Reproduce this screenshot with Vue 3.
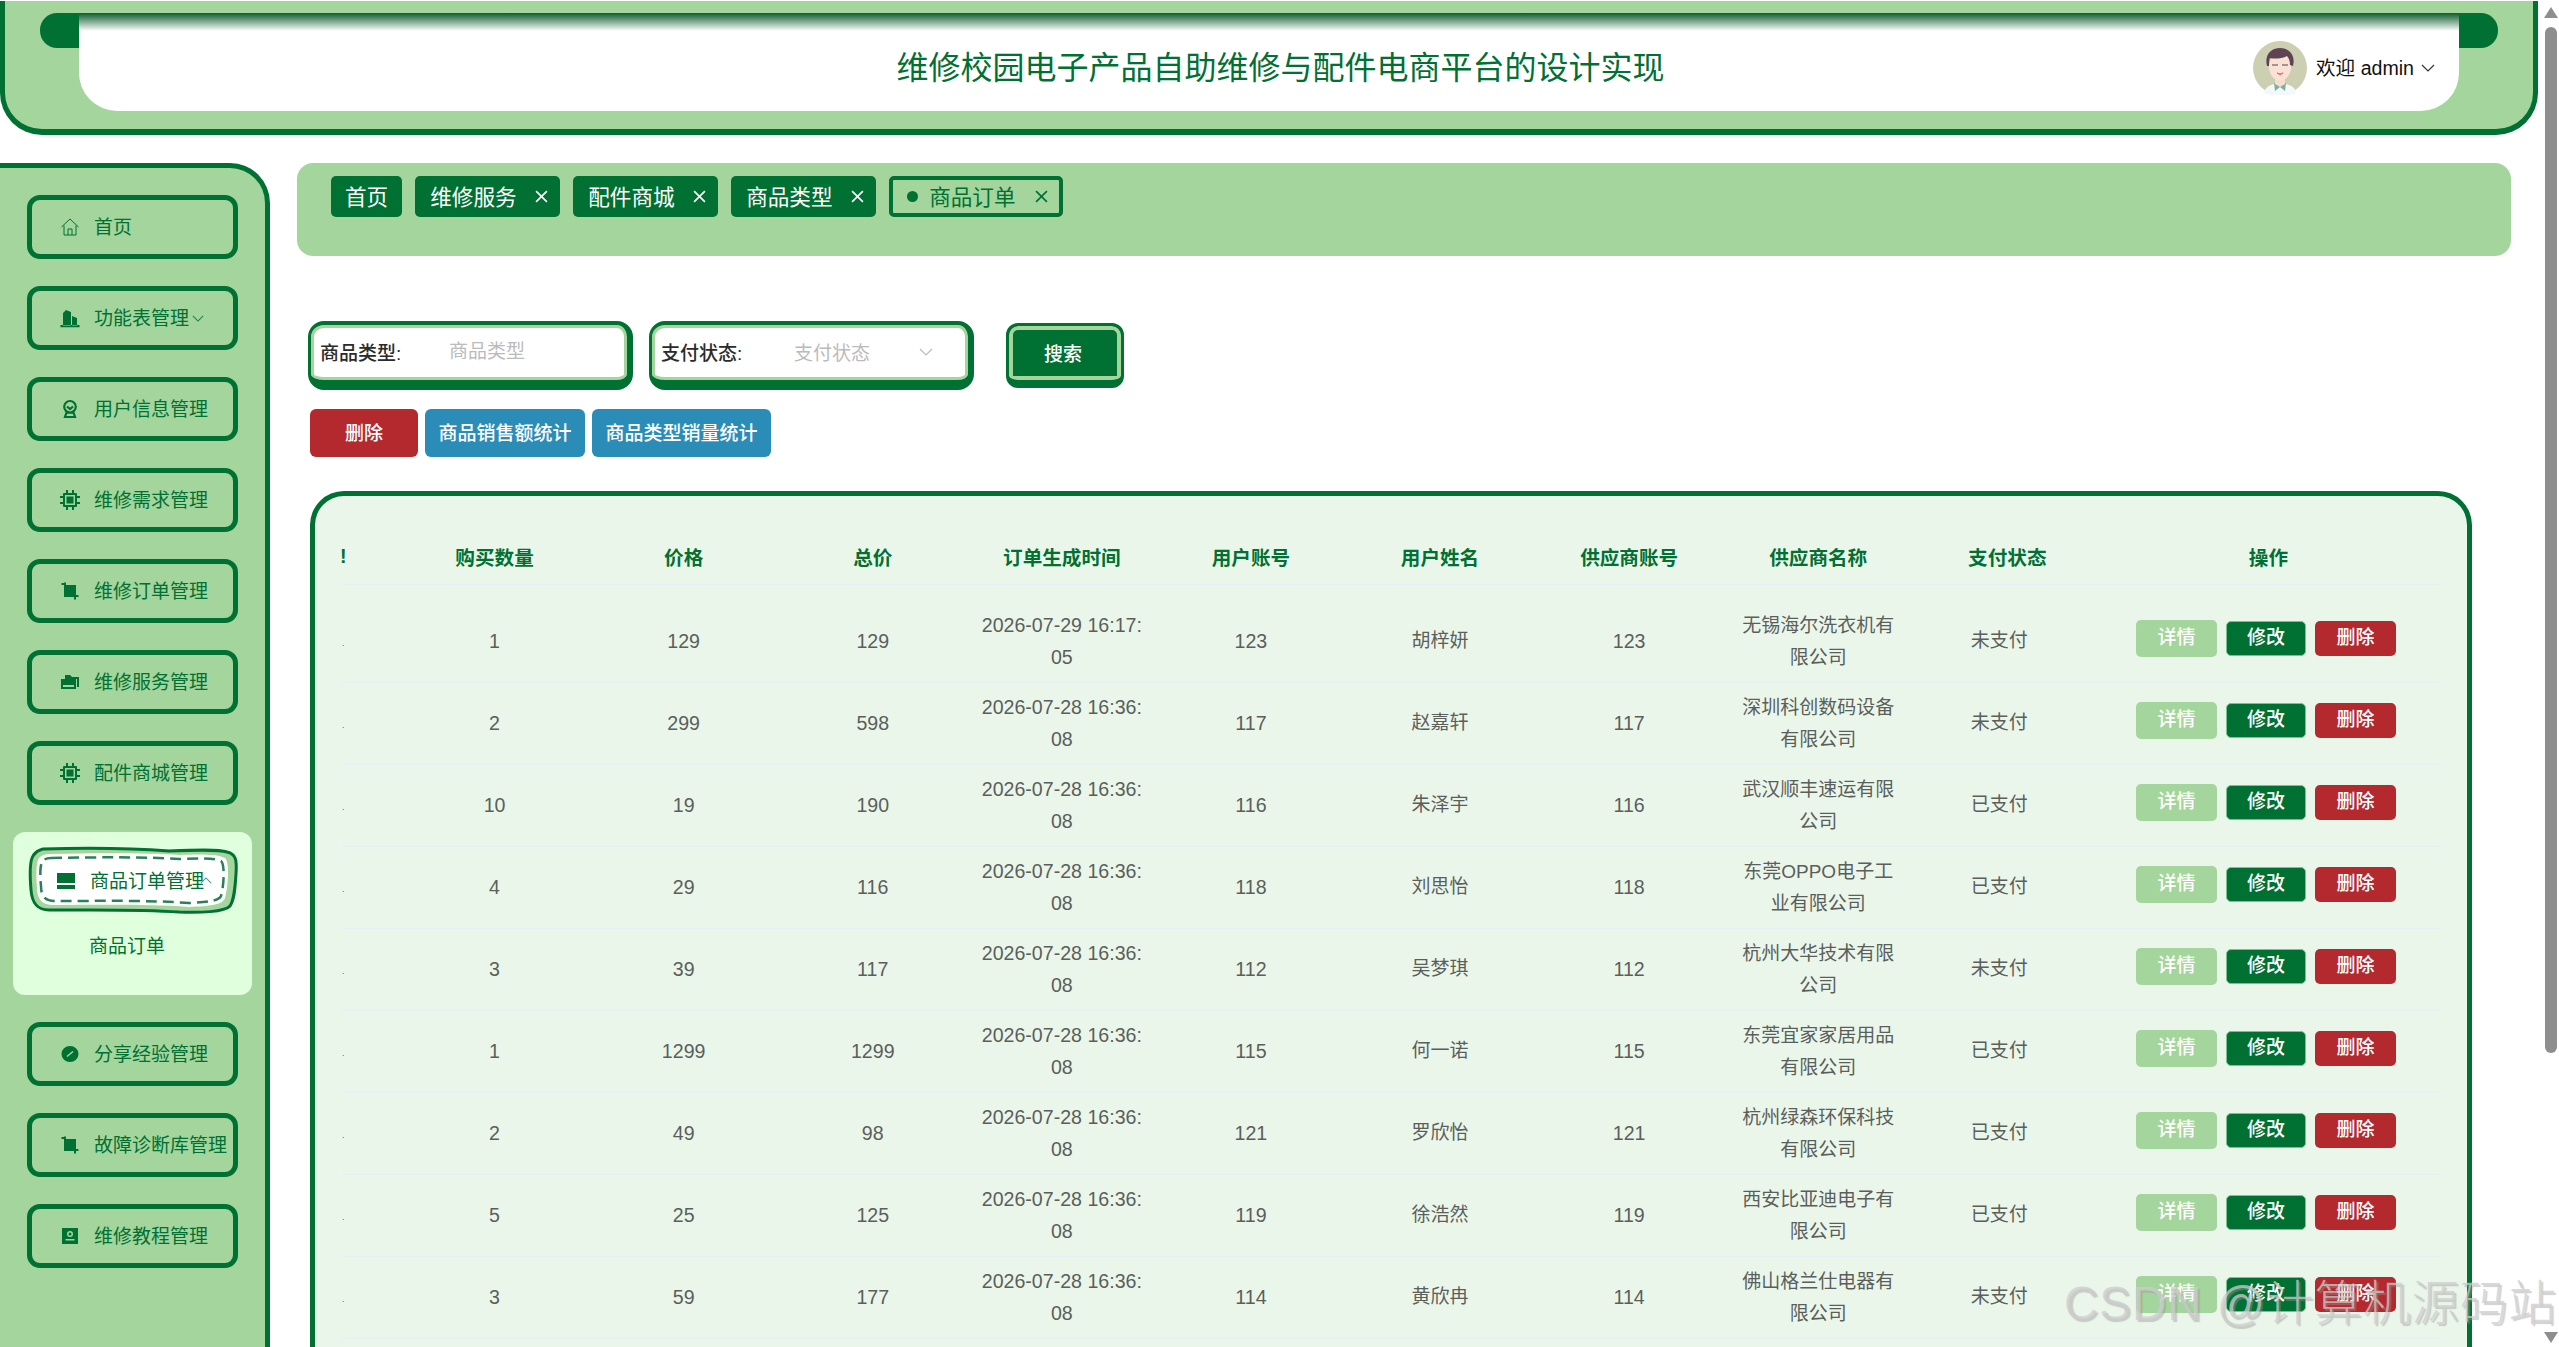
<script setup>
const icons = {
  home: { d: 'M1.5 10 10 2l8.5 8M4 8.5V18h12V8.5M8 18v-6h4v6', line: true },
  office: { d: 'M3 17.5V5l3-3 5 2v13.5zM12 17.5V8l5 2v7.5zM.5 17h19v2.2H.5z' },
  user: { d: 'M10 2a5.8 5.8 0 1 0 0 11.6A5.8 5.8 0 1 0 10 2zM7 7.5l3 2.5 3-2.5M6.5 13.5 5 18h10l-1.5-4.5', line: true, bold: true },
  cpu: { d: 'M4 3h12a1 1 0 0 1 1 1v12a1 1 0 0 1-1 1H4a1 1 0 0 1-1-1V4a1 1 0 0 1 1-1zM5 5v10h10V5zM6.5 6.5h7v7h-7zM6 0h2v3H6zM12 0h2v3h-2zM6 17h2v3H6zM12 17h2v3h-2zM0 6h3v2H0zM0 12h3v2H0zM17 6h3v2h-3zM17 12h3v2h-3z' },
  crop: { d: 'M4 1.5h2V4h10v10h2.5v2H16v2.5h-2V16H4V4H1.5V2H4z' },
  folder: { d: 'M5 3h5l2 2h7v10h-2V7H5zM1 7h15v10H1zM3 13v2h11v-2z' },
  order: { d: 'M1 2h18v10H1zM1 14h18v4H1z' },
  help: { d: 'M10 2a8.5 8 0 1 0 0 16 8.5 8 0 1 0 0-16zM12.5 7l1 1-6 5-1-1z' },
  card: { d: 'M2 2h16v16H2zM10 5a3 3 0 1 0 0 6 3 3 0 1 0 0-6zM10 6.5a1.5 1.5 0 1 1 0 3 1.5 1.5 0 1 1 0-3zM5.5 13h9v1.5h-9z' }
}

const menus = [
  { title: '首页', icon: 'home' },
  { title: '功能表管理', icon: 'office', arrow: true },
  { title: '用户信息管理', icon: 'user' },
  { title: '维修需求管理', icon: 'cpu' },
  { title: '维修订单管理', icon: 'crop' },
  { title: '维修服务管理', icon: 'folder' },
  { title: '配件商城管理', icon: 'cpu' },
  { title: '商品订单管理', icon: 'order', open: true, children: ['商品订单'] },
  { title: '分享经验管理', icon: 'help' },
  { title: '故障诊断库管理', icon: 'crop' },
  { title: '维修教程管理', icon: 'card' }
]

const tags = [
  { title: '首页', fixed: true },
  { title: '维修服务' },
  { title: '配件商城' },
  { title: '商品类型' },
  { title: '商品订单', active: true }
]

const columns = ['购买数量', '价格', '总价', '订单生成时间', '用户账号', '用户姓名', '供应商账号', '供应商名称', '支付状态']

const rows = [
  [1, 129, 129, '2026-07-29 16:17:05', 123, '胡梓妍', 123, '无锡海尔洗衣机有限公司', '未支付'],
  [2, 299, 598, '2026-07-28 16:36:08', 117, '赵嘉轩', 117, '深圳科创数码设备有限公司', '未支付'],
  [10, 19, 190, '2026-07-28 16:36:08', 116, '朱泽宇', 116, '武汉顺丰速运有限公司', '已支付'],
  [4, 29, 116, '2026-07-28 16:36:08', 118, '刘思怡', 118, '东莞OPPO电子工业有限公司', '已支付'],
  [3, 39, 117, '2026-07-28 16:36:08', 112, '吴梦琪', 112, '杭州大华技术有限公司', '未支付'],
  [1, 1299, 1299, '2026-07-28 16:36:08', 115, '何一诺', 115, '东莞宜家家居用品有限公司', '已支付'],
  [2, 49, 98, '2026-07-28 16:36:08', 121, '罗欣怡', 121, '杭州绿森环保科技有限公司', '已支付'],
  [5, 25, 125, '2026-07-28 16:36:08', 119, '徐浩然', 119, '西安比亚迪电子有限公司', '已支付'],
  [3, 59, 177, '2026-07-28 16:36:08', 114, '黄欣冉', 114, '佛山格兰仕电器有限公司', '未支付']
]
</script>

<template>
  <div class="page">
    <header class="top">
      <div class="top-bar">
        <div class="top-panel">
          <span></span>
          <h1 class="title">维修校园电子产品自助维修与配件电商平台的设计实现</h1>
          <div class="user">
            <svg class="avatar" viewBox="0 0 54 54">
              <circle cx="27" cy="27" r="27" fill="#cdcfb3" />
              <path d="M11 52c1-7 8-9 16-10 8 1 15 3 16 10-5 3-27 3-32 0z" fill="#f3f8fb" />
              <path d="M21 42l6 3 6-3-1 8-5-4-5 4z" fill="#7fb09a" />
              <path d="M22 34h10v9l-5 3-5-3z" fill="#f6dccb" />
              <ellipse cx="27" cy="26" rx="11" ry="13.5" fill="#f9e2d5" />
              <path d="M14 25c-3-12 5-18 13-18s16 6 13 18l-3-1c0-4-1-7-3-9-5 3-14 3-17 2-1 2-1 5-1 8z" fill="#5e4353" />
              <path d="M19 24h6M29 24h6" stroke="#8b7a78" stroke-width="1.5" />
              <path d="M24 32q3 2 6 0-3 3-6 0z" fill="#f0655f" stroke="#f0655f" />
            </svg>
            <span class="user-name">欢迎 <b>admin</b></span>
            <svg class="chevron" viewBox="0 0 14 8"><path d="M1 1l6 6 6-6" /></svg>
          </div>
        </div>
      </div>
    </header>

    <div class="body">
      <aside class="side">
        <template v-for="m in menus" :key="m.title">
          <div v-if="m.open" class="group">
            <div class="menu-item active">
              <svg class="wobble" viewBox="0 0 208 65">
                <path class="wobble-outer" d="M14 1C50 0 100 0 140 3C165 2 190 1 198 4C207 6 208 12 207 26C206 42 205 52 201 58C196 64 170 65 150 64C110 61 60 62 20 62C8 62 3 55 2 42C1 30 0 14 4 8C7 3 10 2 14 1Z" />
                <path class="wobble-inner" d="M20 6C70 5 120 5 150 7C170 6 190 6 196 10C201 14 199 40 196 50C194 57 180 58 160 59C120 56 70 57 24 57C14 57 8 52 8 40C7 28 7 14 10 10C13 7 16 6 20 6Z" />
                <path class="wobble-dash" d="M22 10C70 9 120 9 150 11C170 10 186 10 192 13C196 16 195 38 192 48C190 53 178 54 160 55C120 52 70 53 26 53C16 53 12 48 12 38C11 28 11 18 13 14C15 11 18 10 22 10Z" />
              </svg>
              <svg class="menu-icon" viewBox="0 0 20 20"><path :d="icons[m.icon].d" fill-rule="evenodd" /></svg>
              <span class="menu-text">{{ m.title }}</span>
              <svg class="menu-arrow up" viewBox="0 0 14 8"><path d="M1 1l6 6 6-6" /></svg>
            </div>
            <div v-for="c in m.children" :key="c" class="sub-item">{{ c }}</div>
          </div>
          <div v-else class="menu-item">
            <svg class="menu-icon" :class="{ line: icons[m.icon].line, bold: icons[m.icon].bold }" viewBox="0 0 20 20">
              <path :d="icons[m.icon].d" fill-rule="evenodd" />
            </svg>
            <span class="menu-text">{{ m.title }}</span>
            <svg v-if="m.arrow" class="menu-arrow" viewBox="0 0 14 8"><path d="M1 1l6 6 6-6" /></svg>
          </div>
        </template>
      </aside>

      <main class="main">
        <div class="tag-bar">
          <div v-for="t in tags" :key="t.title" class="tag" :class="{ on: t.active }">
            <i v-if="t.active" class="dot"></i>
            <span>{{ t.title }}</span>
            <svg v-if="!t.fixed" class="tag-close" viewBox="0 0 12 12"><path d="M1 1l10 10M11 1 1 11" /></svg>
          </div>
        </div>

        <div class="search">
          <label class="field">
            <span class="field-label">商品类型:</span>
            <input class="field-input" type="text" placeholder="商品类型" readonly />
          </label>
          <div class="field">
            <span class="field-label wide">支付状态:</span>
            <span class="field-holder">支付状态</span>
            <svg class="field-arrow" viewBox="0 0 14 8"><path d="M1 1l6 6 6-6" /></svg>
          </div>
          <button class="search-btn" type="button">搜索</button>
        </div>

        <div class="actions">
          <button class="btn red" type="button">删除</button>
          <button class="btn blue b1" type="button">商品销售额统计</button>
          <button class="btn blue b2" type="button">商品类型销量统计</button>
        </div>

        <section class="card">
          <table class="grid">
            <colgroup>
              <col class="col-first" />
              <col v-for="c in columns" :key="c" class="col-data" />
              <col />
            </colgroup>
            <thead>
              <tr>
                <th class="check">!</th>
                <th v-for="c in columns" :key="c">{{ c }}</th>
                <th class="op-head">操作</th>
              </tr>
            </thead>
            <tbody>
              <tr v-for="(r, i) in rows" :key="i">
                <td class="check"><span class="tick">.</span></td>
                <td v-for="(v, j) in r" :key="j" :class="{ cjk: j === 5, supplier: j === 7, status: j === 8 }">{{ v }}</td>
                <td>
                  <div class="ops">
                    <button class="op detail" type="button">详情</button>
                    <button class="op edit" type="button">修改</button>
                    <button class="op del" type="button">删除</button>
                  </div>
                </td>
              </tr>
            </tbody>
          </table>
        </section>
      </main>
    </div>

    <div class="scrollbar">
      <i class="arrow-up"></i>
      <div class="thumb"></div>
      <i class="arrow-down"></i>
    </div>
    <div class="watermark">CSDN @计算机源码站</div>
  </div>
</template>

<style scoped>
.page {
  position: relative;
  height: 1347px;
  overflow: hidden;
  background: #fff;
  color: #5a5f5b;
  font-family: "Liberation Sans", "Noto Sans CJK SC", sans-serif;
  font-size: 19.6px;
}

.top {
  box-sizing: border-box;
  width: 2538px;
  height: 134px;
  margin-top: 1px;
  padding: 12px 35px 0;
  background: #a3d59c;
  border: solid #007033;
  border-width: 0 5px 6px 5px;
  border-radius: 0 0 42px 42px;
}

.top-bar {
  height: 35px;
  background: #007033;
  border-radius: 17px;
}

.top-panel {
  box-sizing: border-box;
  display: grid;
  grid-template-columns: 1fr auto 1fr;
  align-items: center;
  height: 98px;
  margin: 0 39px;
  padding: 9px 24px 0 47px;
  background: linear-gradient(#0c5c2e 0, #fff 18px);
  border-radius: 0 0 38px 38px;
}

.title {
  margin: 0 0 3px;
  color: #007033;
  font-size: 32px;
  font-weight: 400;
  white-space: nowrap;
}

.user {
  display: flex;
  align-items: center;
  justify-self: end;
  color: #111;
  font-size: 19.6px;
}

.avatar {
  width: 54px;
  height: 54px;
  margin-top: 3px;
  margin-right: 9px;
}

.user-name b {
  font-weight: 500;
}

.chevron {
  width: 14px;
  height: 8px;
  margin: 2px 0 0 7px;
  fill: none;
  stroke: #333;
  stroke-width: 1.2;
}

.body {
  display: flex;
  gap: 27px;
  height: 1184px;
  margin-top: 28px;
}

.side {
  box-sizing: border-box;
  flex: none;
  width: 270px;
  padding: 27px 0 0 27px;
  background: #a3d59c;
  border: solid #007033;
  border-width: 5px 5px 0 0;
  border-radius: 0 40px 0 0;
}

.menu-item {
  box-sizing: border-box;
  display: flex;
  align-items: center;
  width: 211px;
  height: 64px;
  margin-bottom: 27px;
  padding-left: 28px;
  color: #007033;
  font-size: 19px;
  border: 5px solid #007033;
  border-radius: 13px;
  white-space: nowrap;
}

.menu-icon {
  position: relative;
  flex: none;
  width: 20px;
  height: 20px;
  margin-right: 14px;
  fill: #007033;
}

.menu-icon.line {
  fill: none;
  stroke: #007033;
  stroke-width: 1;
}

.menu-icon.bold {
  stroke-width: 2.2;
}

.menu-text {
  position: relative;
  margin-bottom: 3px;
}

.menu-arrow {
  position: relative;
  flex: none;
  width: 12px;
  height: 7px;
  margin-left: 3px;
  fill: none;
  stroke: #1b7d49;
  stroke-width: 1.2;
}

.menu-arrow.up {
  margin-left: -4px;
  stroke: #4f9b72;
  transform: rotate(180deg);
}

.group {
  box-sizing: border-box;
  width: 239px;
  height: 163px;
  margin: 0 0 27px -14px;
  padding: 16px;
  background: #e0ffdc;
  border-radius: 12px;
}

.menu-item.active {
  position: relative;
  width: 208px;
  height: 65px;
  margin: 0;
  padding-left: 27px;
  border: 0;
}

.wobble {
  position: absolute;
  inset: 0;
  width: 208px;
  height: 65px;
  overflow: visible;
}

.wobble-outer {
  fill: #a3d59c;
  stroke: #007033;
  stroke-width: 3;
}

.wobble-inner {
  fill: #fff;
}

.wobble-dash {
  fill: none;
  stroke: #2a8059;
  stroke-width: 2.5;
  stroke-dasharray: 11 6;
}

.sub-item {
  margin: 17px 0 0 60px;
  color: #007033;
  font-size: 19px;
  line-height: 33px;
}

.main {
  flex: none;
  width: 2214px;
}

.tag-bar {
  box-sizing: border-box;
  display: flex;
  gap: 13px;
  height: 93px;
  padding: 13px 34px;
  background: #a3d59c;
  border-radius: 16px;
}

.tag {
  box-sizing: border-box;
  display: flex;
  align-items: center;
  height: 41px;
  padding: 0 12.6px 3px 15px;
  color: #fff;
  font-size: 21.6px;
  background: #007033;
  border-radius: 5px;
}

.tag:first-child {
  padding: 0 14px 3px;
}

.tag.on {
  padding: 0 11px 3px 14px;
  color: #007033;
  background: #a3d59c;
  border: 4px solid #007033;
}

.dot {
  width: 11px;
  height: 11px;
  margin: 3px 11px 0 0;
  background: #007033;
  border-radius: 50%;
}

.tag-close {
  width: 13px;
  height: 13px;
  margin: 3px 0 0 18px;
  fill: none;
  stroke: currentColor;
  stroke-width: 1.5;
}

.tag.on .tag-close {
  margin-left: 19px;
}

.search {
  display: flex;
  align-items: flex-start;
  gap: 16px;
  margin: 65px 0 19px 11px;
}

.field {
  box-sizing: border-box;
  display: flex;
  align-items: center;
  width: 325px;
  height: 69px;
  padding-left: 6px;
  padding-bottom: 2px;
  font-size: 19px;
  background: #fff;
  border: solid #007033;
  border-width: 4px 6px 10px 3px;
  border-radius: 16px;
  box-shadow: inset 0 0 0 3px #a3d59c;
}

.field-label {
  flex: none;
  width: 129px;
  color: #2b2b2b;
  font-weight: 500;
  padding-left: 3px;
}

.field-label.wide {
  width: 133px;
}

.field-input {
  width: 140px;
  padding: 0;
  color: #555;
  font: inherit;
  background: transparent;
  border: 0;
  outline: 0;
}

.field-input::placeholder,
.field-holder {
  color: #bbb;
  opacity: 1;
}

.field-arrow {
  width: 14px;
  height: 8px;
  margin-left: 49px;
  fill: none;
  stroke: #bbb;
  stroke-width: 1.2;
}

.search-btn {
  box-sizing: border-box;
  width: 118px;
  height: 65px;
  margin: 2px 0 0 16px;
  padding: 0 4px 2px 0;
  color: #fff;
  font: inherit;
  font-size: 19px;
  font-weight: 500;
  background: #007033;
  border: solid #007033;
  border-width: 3px 3px 8px;
  border-radius: 12px;
  box-shadow: inset 0 0 0 4px #a3d59c;
}

.actions {
  display: flex;
  gap: 7px;
  margin: 0 0 34px 13px;
}

.btn {
  height: 48px;
  padding: 0 0 3px;
  color: #fff;
  font: inherit;
  font-size: 19px;
  font-weight: 500;
  border: 0;
  border-radius: 6px;
}

.red {
  width: 108px;
  background: #b4292d;
}

.blue {
  background: #2c8cb8;
}

.b1 {
  width: 160px;
}

.b2 {
  width: 179px;
}

.card {
  box-sizing: border-box;
  width: 2162px;
  height: 900px;
  margin-left: 13px;
  padding: 34px 27px 0;
  background: #ebf6eb;
  border: 5px solid #007033;
  border-bottom: 0;
  border-radius: 34px 34px 0 0;
}

.grid {
  width: 2099px;
  border-collapse: collapse;
  table-layout: fixed;
}

.col-first {
  width: 58px;
}

.col-data {
  width: 189.1px;
}

th {
  height: 52px;
  padding: 0 12px 2px;
  color: #007033;
  font-weight: 700;
  border-bottom: 1px solid #e6eff3;
}

th.op-head {
  padding-right: 18px;
}

td {
  height: 79px;
  padding: 0 12px 2px;
  line-height: 32px;
  text-align: center;
  word-break: break-all;
  border-bottom: 1px solid #e6eff3;
}

tbody tr:first-child td {
  padding-top: 16px;
}

td.cjk {
  font-size: 19px;
}

td.supplier {
  padding-bottom: 0;
  font-size: 19px;
}

td.status {
  padding-right: 28px;
  font-size: 19px;
}

th.check {
  padding: 0 0 2px;
  text-align: left;
  text-indent: -2px;
}

td.check {
  padding-right: 0;
  padding-left: 0;
  text-align: left;
}

.tick {
  font-size: 9px;
}

.ops {
  display: flex;
  align-items: center;
  justify-content: center;
  gap: 9px;
  padding: 0 11px 5px 0;
}

.op {
  box-sizing: border-box;
  width: 80px;
  height: 35px;
  padding: 0;
  color: #fff;
  font: inherit;
  font-size: 19px;
  font-weight: 500;
  border: 0;
  border-radius: 5px;
}

.detail {
  width: 81px;
  height: 37px;
  background: #a3d59c;
}

.edit {
  background: #007033;
  border: 1px solid #7cc08a;
}

.del {
  width: 81px;
  background: #b4292d;
}

.scrollbar {
  position: absolute;
  top: 0;
  right: 0;
  bottom: 0;
  display: flex;
  flex-direction: column;
  align-items: center;
  width: 16px;
  background: #fff;
}

.arrow-up,
.arrow-down {
  width: 0;
  height: 0;
  border-right: 7px solid transparent;
  border-left: 7px solid transparent;
}

.arrow-up {
  margin-top: 7px;
  border-bottom: 11px solid #8e8e8e;
}

.arrow-down {
  margin: auto 0 4px;
  border-top: 11px solid #8e8e8e;
}

.thumb {
  width: 12px;
  height: 1026px;
  margin-top: 9px;
  background: #8e8e8e;
  border-radius: 6px;
}

.watermark {
  position: absolute;
  right: 2px;
  bottom: 15px;
  color: rgba(205, 205, 205, 0.75);
  font-size: 47.5px;
  font-weight: 300;
  line-height: 56px;
  text-shadow: 2px 2px 1px rgba(150, 150, 150, 0.45);
  white-space: nowrap;
  letter-spacing: 1px;
}
</style>

<style>
html,
body {
  overflow: hidden;
}
</style>
